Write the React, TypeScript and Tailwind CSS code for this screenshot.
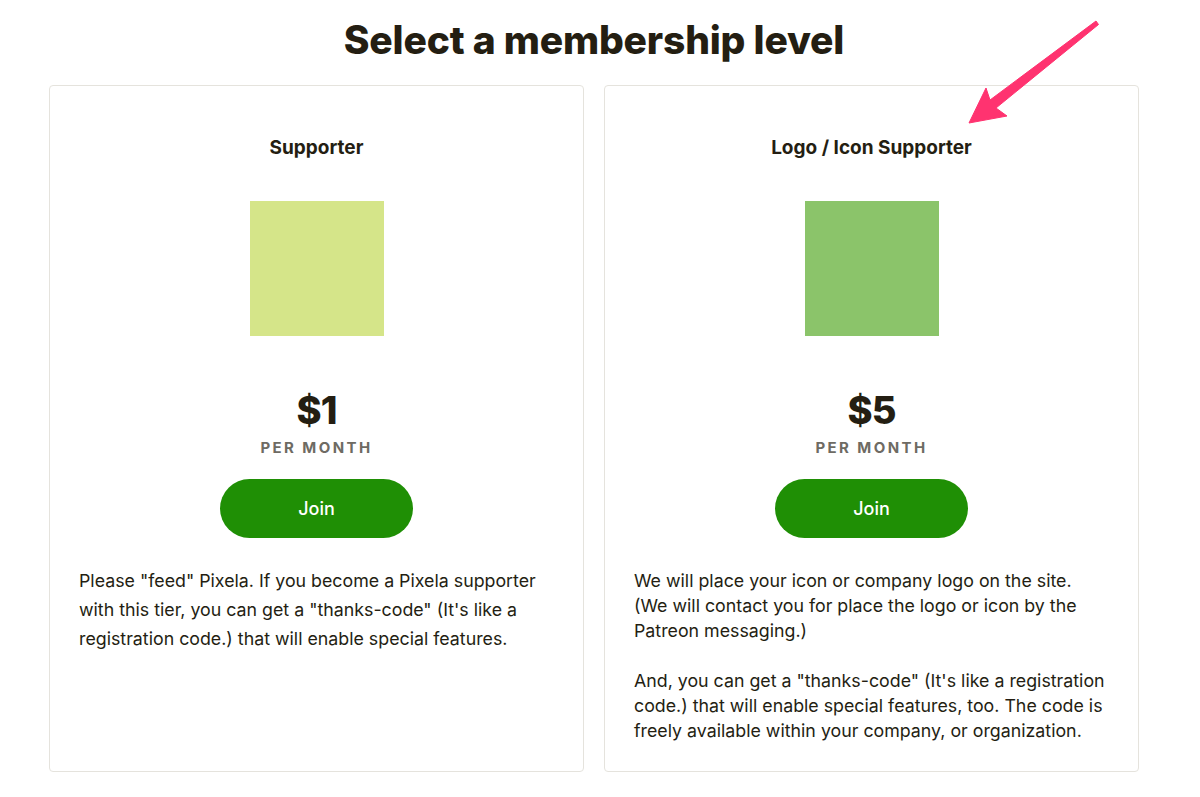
import React from "react";

const TIERS = [
  {
    id: "supporter",
    name: "Supporter",
    color: "bg-[#d5e589]",
    price: "$1",
    leading: "leading-[29px] mt-[28px]",
    body: [
      "Please \"feed\" Pixela. If you become a Pixela supporter with this tier, you can get a \"thanks-code\" (It's like a registration code.) that will enable special features.",
    ],
  },
  {
    id: "logo",
    name: "Logo / Icon Supporter",
    color: "bg-[#8bc46a]",
    price: "$5",
    leading: "leading-[25px] mt-[30px]",
    body: [
      "We will place your icon or company logo on the site.\n(We will contact you for place the logo or icon by the Patreon messaging.)",
      "And, you can get a \"thanks-code\" (It's like a registration code.) that will enable special features, too. The code is freely available within your company, or organization.",
    ],
  },
];

function Arrow() {
  return (
    <svg className="absolute left-0 top-0 pointer-events-none" width="1200" height="200" viewBox="0 0 1200 200">
      <polygon
        points="1098.5,24.5 996,108 1007,116 969,123 986,88 990,100 1096,21"
        fill="#ff3370"
        stroke="#ff3370"
        strokeWidth="1"
        strokeLinejoin="round"
      />
    </svg>
  );
}

export default function App() {
  return (
    <main className="relative w-[1200px] h-[797px] bg-white overflow-hidden text-[#241e12]" style={{ fontFamily: "Inter, 'Liberation Sans', sans-serif" }}>
      <Arrow />
      <div className="ml-[49px] w-[1090px] pt-[17px]">
        <h1 className="text-center text-[39px] leading-[46px] font-extrabold tracking-[-0.2px]">Select a membership level</h1>
        <div className="grid grid-cols-2 gap-[20px] mt-[22px]">
          {TIERS.map((t) => (
            <div key={t.id} className="h-[687px] border border-[#e5e3dd] rounded-[4px] px-[29px] pt-[50px] flex flex-col items-center">
              <h2 className="text-[19px] leading-[24px] font-bold">{t.name}</h2>
              <div className={`w-[134px] h-[135px] mt-[41px] ${t.color} blur-[0.5px]`} />
              <div className="mt-[52px] text-[38px] leading-[44px] font-extrabold tracking-[-1px]">{t.price}</div>
              <div className="mt-[6px] text-[15px] leading-[20px] font-bold tracking-[2.4px] text-[#6e6b63]">PER MONTH</div>
              <button className="mt-[21px] w-[193px] h-[59px] rounded-full bg-[#1f8f05] text-white text-[18px] font-medium">Join</button>
              <div className={`self-stretch text-[17.8px] ${t.leading} space-y-[25px]`}>
                {t.body.map((p, i) => (
                  <p key={i} className="whitespace-pre-line">{p}</p>
                ))}
              </div>
            </div>
          ))}
        </div>
      </div>
    </main>
  );
}
